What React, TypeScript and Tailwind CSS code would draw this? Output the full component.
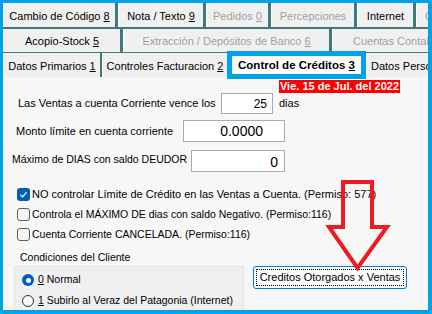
import clsx from 'clsx'
import { ReactNode } from 'react'

interface TabProps {
  children: ReactNode
  w?: string
  disabled?: boolean
  left?: string
}

function Tab({ children, w, disabled, left }: TabProps) {
  return (
    <div
      className={clsx(
        'flex h-full items-center overflow-hidden whitespace-nowrap border-l border-white bg-[#f0f0f0] pt-[2px]',
        w ?? 'flex-1',
        left ? left : 'justify-center',
        disabled ? 'text-[#a0a0a0]' : 'text-black'
      )}
    >
      <span>{children}</span>
    </div>
  )
}

function Check({ checked }: { checked?: boolean }) {
  if (checked) {
    return (
      <span className="flex h-[13px] w-[13px] shrink-0 items-center justify-center rounded-[3px] bg-[#005fb8]">
        <svg width="9" height="9" viewBox="0 0 9 9">
          <path d="M1.5 4.8 L3.6 6.8 L7.6 2.2" fill="none" stroke="white" strokeWidth="1.2" />
        </svg>
      </span>
    )
  }
  return <span className="h-[13px] w-[13px] shrink-0 rounded-[3px] border border-[#5d5d5d] bg-[#f5f5f5]" />
}

function Radio({ checked }: { checked?: boolean }) {
  if (checked) {
    return (
      <span className="flex h-[12px] w-[12px] shrink-0 items-center justify-center rounded-full bg-[#005fb8]">
        <span className="h-[5px] w-[5px] rounded-full bg-white" />
      </span>
    )
  }
  return <span className="h-[12px] w-[12px] shrink-0 rounded-full border border-[#333] bg-[#f7f7f7]" />
}

export default function App() {
  return (
    <div className="h-[314px] w-[432px] overflow-hidden bg-[#00a2e8] pb-[4px] pl-[3px] pr-[4px] pt-[3px] font-['Liberation_Sans',Arial,sans-serif] text-[11px] text-black">
      <div className="relative flex h-full flex-col bg-[#f7f7f7]">
        {/* Tabs */}
        <div className="flex flex-col bg-[#3d7b7b]">
          <div className="flex h-[24px] gap-[3px]">
            <Tab w="w-[112px]">Cambio de Código <u>8</u></Tab>
            <Tab w="w-[85px]">Nota / Texto <u>9</u></Tab>
            <Tab w="w-[62px]" disabled>Pedidos <u>0</u></Tab>
            <Tab w="w-[83px]" disabled>Percepciones</Tab>
            <Tab w="w-[56px]">Internet</Tab>
            <Tab disabled left="pl-[8px]">C</Tab>
          </div>
          <div className="mt-[2px] flex h-[23px] gap-[3px]">
            <Tab w="w-[117px]">Acopio-Stock <u>5</u></Tab>
            <Tab w="w-[206px]" disabled>Extracción / Depósitos de Banco <u>6</u></Tab>
            <Tab disabled left="pl-[20px]">Cuentas Contab</Tab>
          </div>
          <div className="mt-[1px] flex h-[24px]">
            <Tab w="w-[97px]">Datos Primarios <u>1</u></Tab>
            <div className="w-[2px]" />
            <Tab w="w-[125px]">Controles Facturacion <u>2</u></Tab>
            <div className="relative z-10 -mt-[2px] flex h-[28px] w-[139px] shrink-0 items-center justify-center whitespace-nowrap border-[5px] border-[#00a2e8] bg-white pt-[1px] text-[11.5px] font-bold">
              <span>Control de Créditos <u>3</u></span>
            </div>
            <Tab left="pl-[4px]">Datos Perso</Tab>
          </div>
        </div>

        {/* Content */}
        <div className="flex flex-1 flex-col">
          <div className="mt-[3px] flex justify-end pr-[28px]">
            <span className="h-[13px] w-[121px] overflow-hidden whitespace-nowrap bg-[#ff0000] text-center text-[11px] font-bold leading-[13px] text-white">
              Vie. 15 de Jul. del 2022
            </span>
          </div>

          <div className="flex h-[21px] items-center pl-[15px]">
            <span className="w-[203px] whitespace-nowrap">Las Ventas a cuenta Corriente vence los</span>
            <div className="flex h-[21px] w-[52px] items-center justify-end border border-[#ababab] bg-white pr-[5px] text-[12px]">
              25
            </div>
            <span className="ml-[6px]">dias</span>
          </div>

          <div className="mt-[6px] flex h-[22px] items-center pl-[13px]">
            <span className="w-[167px] whitespace-nowrap">Monto límite en cuenta corriente</span>
            <div className="flex h-[22px] w-[102px] items-center justify-end border border-[#ababab] bg-white pr-[21px] pt-[1px] text-[14px]">
              0.0000
            </div>
          </div>

          <div className="mt-[8px] flex h-[22px] pl-[9px]">
            <span className="w-[179px] whitespace-nowrap pt-[2px] text-[10.5px]">Máximo de DIAS con saldo DEUDOR</span>
            <div className="flex h-[22px] w-[94px] items-center justify-end border border-[#ababab] bg-white pr-[6px] pt-[3px] text-[14px]">
              0
            </div>
          </div>

          <div className="mt-[16px] flex flex-col gap-[7px] pl-[14px]">
            <label className="flex h-[13px] items-center gap-[2px] whitespace-nowrap">
              <Check checked />
              <span>NO controlar Límite de Crédito en las Ventas a Cuenta. (Permiso: 577)</span>
            </label>
            <label className="flex h-[13px] items-center gap-[2px] whitespace-nowrap text-[10.5px]">
              <Check />
              <span>Controla el MÁXIMO DE dias con saldo Negativo. (Permiso:116)</span>
            </label>
            <label className="flex h-[13px] items-center gap-[2px] whitespace-nowrap text-[10.5px]">
              <Check />
              <span>Cuenta Corriente CANCELADA. (Permiso:116)</span>
            </label>
          </div>

          <div className="mt-[10px] h-[12px] pl-[17px] text-[10.5px] leading-[12px]">Condiciones del Cliente</div>

          <div className="mt-[3px] flex flex-1 items-start">
            <div className="ml-[11px] flex h-full w-[230px] flex-col gap-[9px] border border-b-0 border-[#e3e3e3] bg-[#f0f0f0] pl-[7px] pt-[7px] text-[10.5px]">
              <label className="flex h-[12px] items-center gap-[4px] whitespace-nowrap">
                <Radio checked />
                <span><u>0</u> Normal</span>
              </label>
              <label className="flex h-[12px] items-center gap-[4px] whitespace-nowrap">
                <Radio />
                <span><u>1</u> Subirlo al Veraz del Patagonia (Internet)</span>
              </label>
            </div>
            <button className="ml-[9px] h-[23px] w-[154px] rounded-[3px] border border-[#0078d4] bg-[#fdfdfd] p-[2px]">
              <span className="flex h-full w-full items-center justify-center whitespace-nowrap border border-dotted border-black">
                Creditos Otorgados x Ventas
              </span>
            </button>
          </div>
        </div>

        {/* Red arrow annotation */}
        <svg className="pointer-events-none absolute left-0 top-0" width="425" height="307" viewBox="0 0 425 307">
          <polygon
            points="340,179 369,179 369,224 384,224 354.5,265 326,224 340,224"
            fill="none"
            stroke="#ed1c24"
            strokeWidth="4"
            strokeLinejoin="miter"
          />
        </svg>
      </div>
    </div>
  )
}
